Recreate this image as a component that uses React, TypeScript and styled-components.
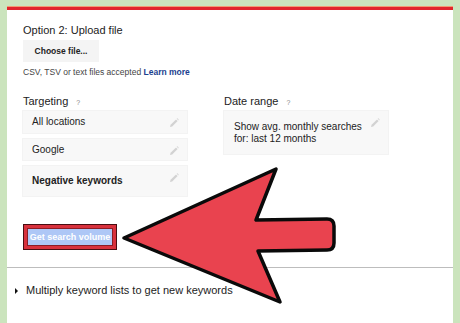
import React from "react";
import styled, { createGlobalStyle } from "styled-components";

const Global = createGlobalStyle`
  html, body { margin: 0; padding: 0; background: #cbe4bd; }
  body { font-family: "Liberation Sans", Arial, sans-serif; }
  * { box-sizing: border-box; }
`;

const Page = styled.div`
  position: relative;
  width: 460px;
  height: 323px;
  padding: 6px 7px 0 7px;
  background: #cbe4bd;
  overflow: hidden;
`;

const Panel = styled.div`
  background: #fff;
  height: 100%;
  display: flex;
  flex-direction: column;
`;

const TopBar = styled.div`
  height: 4px;
  background: #e1262d;
  border-top: 1px solid #f29b74;
`;

const Content = styled.div`
  padding: 14px 0 0 16px;
  display: flex;
  flex-direction: column;
  align-items: flex-start;
`;

const Title = styled.div`
  font-size: 11px;
  line-height: 13px;
  color: #222;
`;

const ChooseButton = styled.div`
  margin-top: 3px;
  width: 76px;
  height: 22px;
  background: #f4f4f4;
  display: flex;
  align-items: center;
  justify-content: center;
  font-size: 8.5px;
  font-weight: bold;
  color: #222;
`;

const Hint = styled.div`
  margin-top: 4px;
  font-size: 8.5px;
  line-height: 12px;
  color: #444;
`;

const LearnMore = styled.span`
  color: #1b3f8f;
  font-weight: bold;
`;

const Columns = styled.div`
  margin-top: 17px;
  display: grid;
  grid-template-columns: 164px 164px;
  column-gap: 37px;
`;

const Column = styled.div`
  display: flex;
  flex-direction: column;
`;

const Label = styled.div`
  font-size: 11px;
  line-height: 13px;
  color: #222;
  display: flex;
  align-items: baseline;
  gap: 8px;
  margin-bottom: 2px;
`;

const Help = styled.span`
  font-size: 7px;
  color: #888;
`;

const FieldStack = styled.div`
  display: flex;
  flex-direction: column;
  gap: 6px;
`;

const Field = styled.div<{ $h: number; $bold?: boolean; $pl?: number }>`
  height: ${(p) => p.$h}px;
  background: #f8f8f8;
  box-shadow: 0 0 0 1px #f3f3f3;
  display: flex;
  justify-content: space-between;
  align-items: center;
  padding: 0 8px 0 ${(p) => p.$pl ?? 9}px;
  font-size: 10px;
  line-height: 11.5px;
  color: #222;
  font-weight: ${(p) => (p.$bold ? "bold" : "normal")};
`;

const PencilWrap = styled.span`
  align-self: flex-start;
  margin-top: 7px;
  flex: none;
  display: flex;
`;

const Frame = styled.div`
  margin-top: 28px;
  border: 1px solid #4a0d12;
  background: #d8313d;
  padding: 3px;
`;

const SearchButton = styled.div`
  width: 86px;
  height: 18px;
  border: 1px solid #8c1d26;
  background: #aec7f6;
  color: #fff;
  font-size: 9px;
  font-weight: bold;
  display: flex;
  align-items: center;
  justify-content: center;
`;

const Divider = styled.div`
  margin-top: 17px;
  height: 1px;
  background: #bdbdbd;
`;

const Expander = styled.div`
  margin-top: 16px;
  padding-left: 8px;
  display: flex;
  align-items: center;
  gap: 8px;
  font-size: 11px;
  line-height: 13px;
  color: #222;
`;

const Caret = styled.span`
  width: 0;
  height: 0;
  border-top: 3px solid transparent;
  border-bottom: 3px solid transparent;
  border-left: 3px solid #111;
`;

const ArrowLayer = styled.svg`
  position: absolute;
  left: 0;
  top: 0;
  pointer-events: none;
`;

const Pencil = () => (
  <PencilWrap>
    <svg width="10" height="10" viewBox="0 0 10 10">
      <path d="M1 9 L1.6 6.8 L7 1.4 L8.6 3 L3.2 8.4 Z" fill="#d2d2d2" />
      <path d="M7.6 0.8 L8.3 0.1 L9.9 1.7 L9.2 2.4 Z" fill="#dadada" />
    </svg>
  </PencilWrap>
);

export default function App() {
  return (
    <>
      <Global />
      <Page>
        <Panel>
          <TopBar />
          <Content>
            <Title>Option 2: Upload file</Title>
            <ChooseButton>Choose file...</ChooseButton>
            <Hint>
              CSV, TSV or text files accepted <LearnMore>Learn more</LearnMore>
            </Hint>
            <Columns>
              <Column>
                <Label>
                  Targeting <Help>?</Help>
                </Label>
                <FieldStack>
                  <Field $h={22}>
                    <span>All locations</span>
                    <Pencil />
                  </Field>
                  <Field $h={21}>
                    <span>Google</span>
                    <Pencil />
                  </Field>
                  <Field $h={30} $bold>
                    <span>Negative keywords</span>
                    <Pencil />
                  </Field>
                </FieldStack>
              </Column>
              <Column>
                <Label>
                  Date range <Help>?</Help>
                </Label>
                <Field $h={43} $pl={10}>
                  <span>
                    Show avg. monthly searches
                    <br />
                    for: last 12 months
                  </span>
                  <Pencil />
                </Field>
              </Column>
            </Columns>
            <Frame>
              <SearchButton>Get search volume</SearchButton>
            </Frame>
          </Content>
          <Divider />
          <Expander>
            <Caret />
            <span>Multiply keyword lists to get new keywords</span>
          </Expander>
        </Panel>
        <ArrowLayer width="460" height="323" viewBox="0 0 460 323">
          <path
            d="M124 238 L276 169 L256 220 L327 219 Q334 219 334 226 L334 243 Q334 250 327 250 L258 251 L280 302 Z"
            fill="#e9434f"
            stroke="#0a0a0a"
            strokeWidth="3.5"
            strokeLinejoin="round"
          />
        </ArrowLayer>
      </Page>
    </>
  );
}
